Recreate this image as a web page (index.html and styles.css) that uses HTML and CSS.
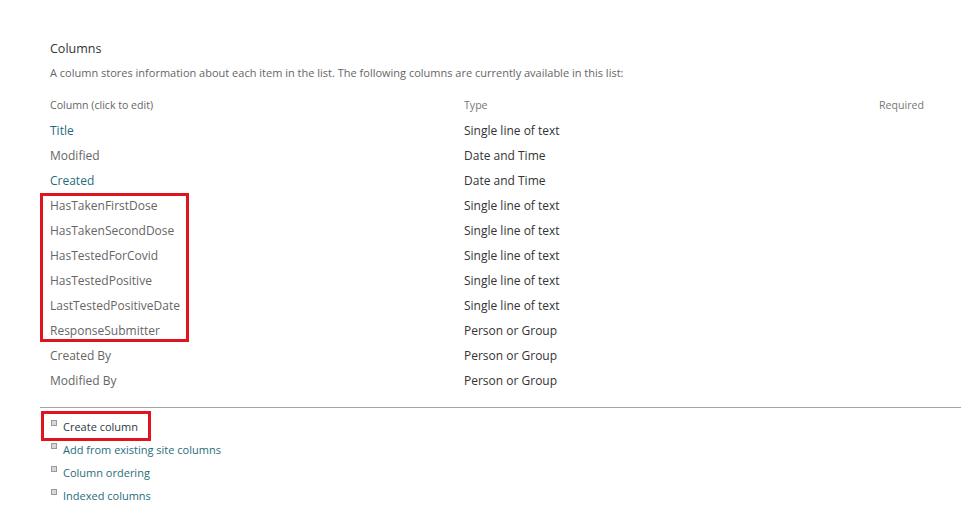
FILE: index.html
```html
<!DOCTYPE html>
<html>
<head>
<meta charset="utf-8">
<link rel="stylesheet" href="styles.css">
</head>
<body>
<div class="page">
  <h2 class="title">Columns</h2>
  <p class="desc">A column stores information about each item in the list. The following columns are currently available in this list:</p>
  <div class="table">
    <div class="row head"><span class="c1">Column (click to edit)</span><span class="c2">Type</span><span class="c3">Required</span></div>
    <div class="row"><span class="c1 link">Title</span><span class="c2">Single line of text</span><span class="c3"></span></div>
    <div class="row"><span class="c1">Modified</span><span class="c2">Date and Time</span><span class="c3"></span></div>
    <div class="row"><span class="c1 link">Created</span><span class="c2">Date and Time</span><span class="c3"></span></div>
    <div class="group">
      <div class="row"><span class="c1">HasTakenFirstDose</span><span class="c2">Single line of text</span><span class="c3"></span></div>
      <div class="row"><span class="c1">HasTakenSecondDose</span><span class="c2">Single line of text</span><span class="c3"></span></div>
      <div class="row"><span class="c1">HasTestedForCovid</span><span class="c2">Single line of text</span><span class="c3"></span></div>
      <div class="row"><span class="c1">HasTestedPositive</span><span class="c2">Single line of text</span><span class="c3"></span></div>
      <div class="row"><span class="c1">LastTestedPositiveDate</span><span class="c2">Single line of text</span><span class="c3"></span></div>
      <div class="row"><span class="c1">ResponseSubmitter</span><span class="c2">Person or Group</span><span class="c3"></span></div>
    </div>
    <div class="row"><span class="c1">Created By</span><span class="c2">Person or Group</span><span class="c3"></span></div>
    <div class="row"><span class="c1">Modified By</span><span class="c2">Person or Group</span><span class="c3"></span></div>
  </div>
  <hr class="sep">
  <ul class="actions">
    <li class="boxed"><span class="bullet"></span><span class="dark">Create column</span></li>
    <li><span class="bullet"></span><span class="alink">Add from existing site columns</span></li>
    <li><span class="bullet"></span><span class="alink">Column ordering</span></li>
    <li><span class="bullet"></span><span class="alink">Indexed columns</span></li>
  </ul>
</div>
</body>
</html>
```
FILE: styles.css
```css
html, body {
  margin: 0;
  padding: 0;
  background: #fff;
}
body {
  font-family: "Open Sans", "Noto Sans", "Liberation Sans", sans-serif;
  color: #333;
  width: 961px;
  height: 529px;
  overflow: hidden;
}
.page {
  padding-top: 40px;
  padding-left: 40px;
}
.title {
  margin: 0 0 0 10px;
  font-size: 12.5px;
  font-weight: normal;
  line-height: 18px;
  color: #333;
}
.desc {
  margin: 7px 0 0 10px;
  font-size: 11px;
  line-height: 16px;
  color: #666;
}
.table {
  margin-top: 11px;
}
.row {
  display: grid;
  grid-template-columns: 414px 415px auto;
  padding-left: 10px;
  height: 25px;
  align-items: center;
  font-size: 12px;
}
.row.head {
  height: 26px;
  font-size: 10.6px;
  color: #777;
}
.row.head .c2, .row.head .c3 {
  color: #777;
}
.c1 {
  color: #666;
}
.c1.link {
  color: #1f6d7b;
}
.c2 {
  color: #333;
}
.group {
  position: relative;
}
.group::before {
  content: "";
  position: absolute;
  left: 0;
  top: 0;
  width: 143px;
  height: 143px;
  border: 3px solid #e0141e;
}
.sep {
  margin: 14px 0 0 0;
  border: 0;
  border-top: 1px solid #a6a6a6;
  height: 0;
}
.actions {
  list-style: none;
  margin: 7px 0 0 0;
  padding: 0;
}
.actions li {
  display: flex;
  align-items: center;
  height: 23px;
  padding-left: 11px;
  font-size: 11px;
}
.actions li.boxed {
  position: relative;
}
.actions li.boxed::before {
  content: "";
  position: absolute;
  left: 1px;
  top: -4px;
  width: 104px;
  height: 24px;
  border: 3px solid #e0141e;
}
.bullet {
  width: 4px;
  height: 4px;
  border: 1px solid #9a9a9a;
  background: #d8d8d8;
  margin-right: 6px;
  align-self: flex-start;
  margin-top: 5px;
}
.dark {
  color: #2b3b3f;
}
.alink {
  color: #1f6d7b;
}
```
